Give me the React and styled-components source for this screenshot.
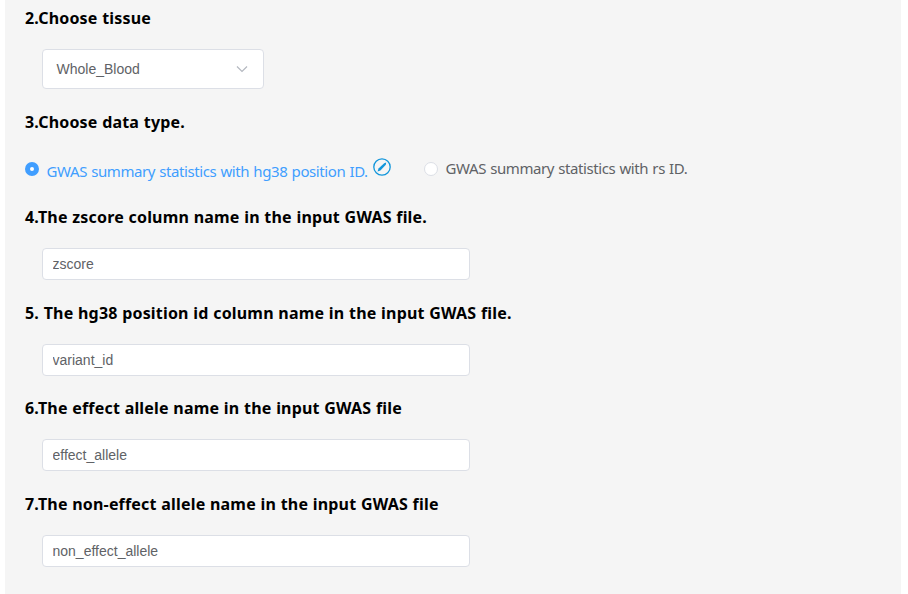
import React from "react";
import styled, { createGlobalStyle } from "styled-components";

const Global = createGlobalStyle`
  * { box-sizing: border-box; }
  body { margin: 0; background: #fff; overflow: hidden; }
`;
const Page = styled.main`
  width: 896px;
  height: 594px;
  margin-left: 5px;
  padding: 0 20px;
  background: #f5f5f5;
  font-family: "Noto Sans", sans-serif;
  overflow: hidden;
`;
const Section = styled.section`
  height: ${(p) => p.$height}px;
`;
const Icon = styled.svg`
  display: block;
  flex: none;
`;
const HintIcon = styled(Icon)`
  margin: 6px 0 0 5px;
`;
const Heading = styled.h3`
  margin: 0;
  height: 36px;
  line-height: 36px;
  font-size: 16px;
  font-weight: 700;
  color: #000;
  white-space: nowrap;
  letter-spacing: 0.18px;
  word-spacing: 0.3px;
`;
const Select = styled.button`
  display: flex;
  align-items: center;
  justify-content: space-between;
  width: 222px;
  height: 40px;
  margin: 13px 0 0 17px;
  padding: 0 15px 0 13.5px;
  border: 1px solid #dcdfe6;
  border-radius: 4px;
  background: #fff;
  color: #606266;
  font: 14px "Liberation Sans", Arial, sans-serif;
`;
const Input = styled.input`
  display: block;
  width: 428px;
  height: 32px;
  margin: 13px 0 0 17px;
  padding: 0 9.5px;
  border: 1px solid #dcdfe6;
  border-radius: 4px;
  background: #fff;
  color: #606266;
  font: 14px "Liberation Sans", Arial, sans-serif;
  outline: none;
`;
const Radios = styled.div`
  display: flex;
  align-items: flex-start;
  padding-top: 12px;
`;
const Radio = styled.label`
  display: flex;
  align-items: flex-start;
  width: ${(p) => (p.$on ? "399px" : "auto")};
  height: 32px;
  color: ${(p) => (p.$on ? "#409eff" : "#606266")};
  font-size: 15px;
  line-height: 32px;
  white-space: nowrap;
`;
const RadioText = styled.span`
  width: ${(p) => p.$width}px;
  margin-top: ${(p) => p.$drop || 0}px;
  letter-spacing: -0.41px;
  word-spacing: 0.7px;
`;
const Dot = styled.span`
  flex: none;
  width: 14px;
  height: 14px;
  margin: 10px 7.5px 0 0;
  border: ${(p) => (p.$on ? "5px solid #409eff" : "1px solid #dcdfe6")};
  border-radius: 50%;
  background: #fff;
`;

const columns = [
  { title: "4.The zscore column name in the input GWAS file.", value: "zscore", height: 96 },
  { title: "5. The hg38 position id column name in the input GWAS file.", value: "variant_id", height: 95 },
  { title: "6.The effect allele name in the input GWAS file", value: "effect_allele", height: 96 },
  { title: "7.The non-effect allele name in the input GWAS file", value: "non_effect_allele", height: 96 },
];

export default function App() {
  return (
    <>
      <Global />
      <Page>
        <Section $height={104}>
          <Heading>2.Choose tissue</Heading>
          <Select>
            Whole_Blood
            <Icon width="12" height="12" viewBox="0 0 12 12" fill="none" stroke="#b4b8c0" strokeWidth="1.2">
              <path d="M1 3.5 6 8.5 11 3.5" />
            </Icon>
          </Select>
        </Section>
        <Section $height={95}>
          <Heading>3.Choose data type.</Heading>
          <Radios>
            <Radio $on>
              <Dot $on />
              <RadioText $width={321.5} $drop={3}>GWAS summary statistics with hg38 position ID.</RadioText>
              <HintIcon width="18" height="18" viewBox="0 0 18 18">
                <circle cx="9" cy="9" r="8.2" fill="none" stroke="#1296db" strokeWidth="1.3" />
                <path d="M4.6 13.4 5.5 10.4 11.2 5.2 13.2 4.5 12.8 6.8 7.4 12.4Z" fill="#1296db" />
              </HintIcon>
            </Radio>
            <Radio>
              <Dot />
              <RadioText $width={242}>GWAS summary statistics with rs ID.</RadioText>
            </Radio>
          </Radios>
        </Section>
        {columns.map((c) => (
          <Section key={c.value} $height={c.height}>
            <Heading>{c.title}</Heading>
            <Input defaultValue={c.value} />
          </Section>
        ))}
      </Page>
    </>
  );
}
